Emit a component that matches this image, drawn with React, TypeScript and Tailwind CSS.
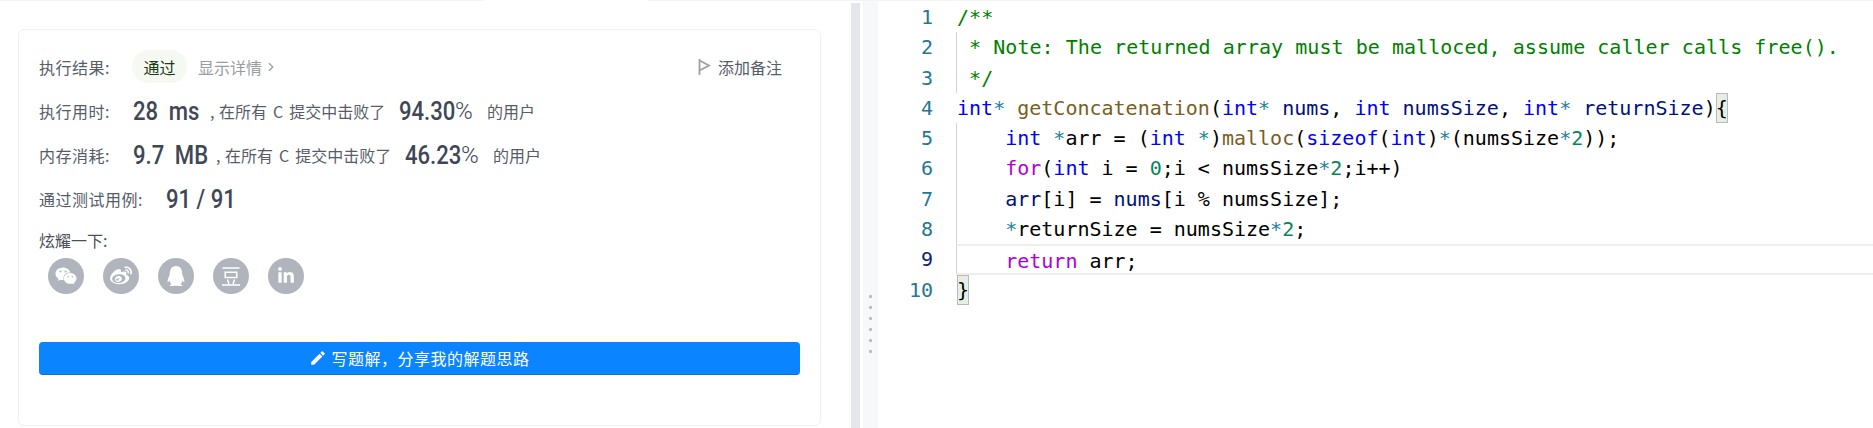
import { ChevronRight } from 'lucide-react';
import { FaWeixin, FaWeibo, FaQq, FaLinkedinIn } from 'react-icons/fa';
import { MdEdit } from 'react-icons/md';
import type { ReactNode } from 'react';

const CN = "font-['Noto_Sans_CJK_SC','Noto_Sans',sans-serif]";

// ============================================
// Result panel
// ============================================

// DIN-like numbers: Roboto squeezed a little, no condensed face is installed
function Stat({ children, className = '' }: { children: ReactNode; className?: string }) {
  return (
    <span className={`shrink-0 inline-block whitespace-nowrap origin-left scale-x-[0.85] font-['Roboto',sans-serif] font-medium text-[26px] leading-none text-[#3f4757] ${className}`}>
      {children}
    </span>
  );
}

function Percent({ value }: { value: string }) {
  return (
    <span className="w-[74px] shrink-0 flex items-center whitespace-nowrap leading-none text-[#3f4757]">
      <Stat className="w-[56px]">{value}</Stat>
      <span className="font-['Roboto',sans-serif] font-light text-[24px]">%</span>
    </span>
  );
}

function RunRow({ label, stat, statWidth, percent }: { label: string; stat: string; statWidth: string; percent: string }) {
  return (
    <div className="flex items-center h-11">
      <span className="w-[94px] shrink-0 tracking-[0.5px]">{label}</span>
      <Stat className={`${statWidth} [word-spacing:6px]`}>{stat}</Stat>
      <span className="w-[200px] shrink-0 pl-[11px] flex items-center whitespace-nowrap">
        <span className="w-[9px]">,</span>
        在所有<span className="mx-[6px]">C</span>提交中击败了
      </span>
      <Percent value={percent} />
      <span className="ml-[14px]">的用户</span>
    </div>
  );
}

function DoubanIcon() {
  return (
    <svg viewBox="0 0 18 19" className="w-[18px] h-[19px]" fill="none" stroke="currentColor" strokeWidth="1.5">
      <path d="M0.5 1h17M3.2 5.2h11.6v5.4H3.2zM5.5 12.5l1.4 4.5M12.5 12.5l-1.4 4.5M0 18h18" />
    </svg>
  );
}

const shareIcons = [
  <FaWeixin key="wx" className="w-[22px] h-[22px]" />,
  <FaWeibo key="wb" className="w-[22px] h-[22px]" />,
  <FaQq key="qq" className="w-[20px] h-[20px]" />,
  <DoubanIcon key="db" />,
  <FaLinkedinIn key="in" className="w-[18px] h-[18px]" />,
];

function ResultPanel() {
  return (
    <div className="w-[851px] shrink-0 pl-[18px] pr-[30px] pt-7">
      <div className={`h-[397px] rounded-md border border-[#f0f0f2] px-5 pt-[14px] text-base text-[#565d69] ${CN}`}>
        <div className="flex items-center h-[45px]">
          <span className="w-[93px] shrink-0 tracking-[0.5px]">执行结果:</span>
          <span className="w-[55px] h-[33px] flex items-center justify-center rounded-full bg-[#f5f9f2] text-[#1c3b12]">通过</span>
          <span className="ml-[11px] text-[#9a9ca3]">显示详情</span>
          <ChevronRight className="w-[14px] h-[14px] ml-[2px] text-[#9a9ca3]" />
          <div className="ml-auto flex items-center mr-[18px]">
            <svg viewBox="0 0 13 16" className="w-[13px] h-4 mr-[7px]" fill="none" stroke="#a0a0a0" strokeWidth="1.8">
              <path d="M1.5 0v16M1.5 1.5L11 6.5 1.5 11.5" />
            </svg>
            <span>添加备注</span>
          </div>
        </div>
        <RunRow label="执行用时:" stat="28 ms" statWidth="w-[66px]" percent="94.30" />
        <RunRow label="内存消耗:" stat="9.7 MB" statWidth="w-[72px]" percent="46.23" />
        <div className="flex items-center h-11">
          <span className="w-[127px] shrink-0 tracking-[0.5px]">通过测试用例:</span>
          <Stat>91 / 91</Stat>
        </div>
        <div className="mt-[7px] leading-6 text-[#4a4f59]">炫耀一下:</div>
        <div className="flex gap-[19px] ml-[9px] mt-[6px]">
          {shareIcons.map((icon, i) => (
            <div key={i} className="w-9 h-9 rounded-full bg-[#b0b4bd] text-white flex items-center justify-center">
              {icon}
            </div>
          ))}
        </div>
        <button className="mt-[48px] w-[761px] h-[33px] rounded-[4px] bg-[#0a84ff] border-b border-[#0a6fd6] text-white tracking-[0.5px] flex items-center justify-center gap-1">
          <MdEdit className="w-[18px] h-[18px]" />
          <span>写题解，分享我的解题思路</span>
        </button>
      </div>
    </div>
  );
}

// ============================================
// Code editor
// ============================================

const K = 'text-[#0000ff]';
const C = 'text-[#af00db]';
const F = 'text-[#795e26]';
const N = 'text-[#098658]';
const V = 'text-[#001080]';
const G = 'text-[#008000] tracking-[0.04px]';
const O = 'text-[#267f99]';

type Tok = [string, string?];

const code: Tok[][] = [
  [['/**', G]],
  [[' * Note: The returned array must be malloced, assume caller calls free().', G]],
  [[' */', G]],
  [['int', K], ['*', O], [' '], ['getConcatenation', F], ['('], ['int', K], ['*', O], [' '], ['nums', V], [', '], ['int', K], [' '], ['numsSize', V], [', '], ['int', K], ['*', O], [' '], ['returnSize', V], [')'], ['{', 'BRACKET']],
  [['    '], ['int', K], [' '], ['*', O], ['arr = ('], ['int', K], [' '], ['*', O], [')'], ['malloc', F], ['('], ['sizeof', K], ['('], ['int', K], [')'], ['*', O], ['(numsSize'], ['*', O], ['2', N], ['));']],
  [['    '], ['for', C], ['('], ['int', K], [' i = '], ['0', N], [';i < numsSize'], ['*', O], ['2', N], [';i++)']],
  [['    '], ['arr', V], ['[i] = '], ['nums', V], ['[i % numsSize];']],
  [['    '], ['*', O], ['returnSize = numsSize'], ['*', O], ['2', N], [';']],
  [['    '], ['return', C], [' arr;']],
  [['}', 'BRACKET']],
];

const guided = [1, 2, 4, 5, 6, 7, 8];

function Editor() {
  return (
    <div className="flex-1 min-w-0 pt-[1px] font-['DejaVu_Sans_Mono',monospace] text-[20px] text-black">
      {code.map((line, i) => {
        const active = i === 8;
        return (
          <div key={i} className="flex h-[30.3px]">
            <div className={`w-[55px] shrink-0 text-right leading-[30px] ${active ? 'text-[#0b216f]' : 'text-[#237893]'}`}>
              {i + 1}
            </div>
            <div className="w-[23px] shrink-0" />
            <div
              className={`flex-1 whitespace-pre leading-[30px] ${guided.includes(i) ? 'border-l border-[#d3d3d3]' : 'border-l border-transparent'} ${active ? 'border-y-2 border-y-[#eeeeee] leading-[26px]' : ''}`}
            >
              {line.map(([text, cls], j) =>
                cls === 'BRACKET' ? (
                  <span key={j} className="inline-block h-[30px] bg-[#e6efe6] outline outline-1 -outline-offset-1 outline-[#b9b9b9]">
                    {text}
                  </span>
                ) : (
                  <span key={j} className={cls}>
                    {text}
                  </span>
                ),
              )}
            </div>
          </div>
        );
      })}
    </div>
  );
}

// ============================================
// Page
// ============================================

export default function App() {
  return (
    <div className="w-[1873px] h-[428px] overflow-hidden bg-white flex flex-col">
      <div className="h-[1px] shrink-0 flex">
        <div className="w-[484px] bg-[#f3f4f7]" />
        <div className="w-[164px] bg-white" />
        <div className="flex-1 bg-[#f3f4f7]" />
      </div>
      <div className="flex flex-1 min-h-0">
        <ResultPanel />
        <div className="w-[9px] shrink-0 mt-[2px] bg-[#e4e6eb]" />
        <div className="w-[3px] shrink-0" />
        <div className="w-[15px] shrink-0 bg-[#f7f8fa] flex flex-col items-center gap-2 pt-[294px]">
          {[0, 1, 2, 3, 4, 5].map((d) => (
            <span key={d} className="w-[3px] h-[3px] bg-[#b8bbc4] rounded-[1px]" />
          ))}
        </div>
        <Editor />
      </div>
    </div>
  );
}
